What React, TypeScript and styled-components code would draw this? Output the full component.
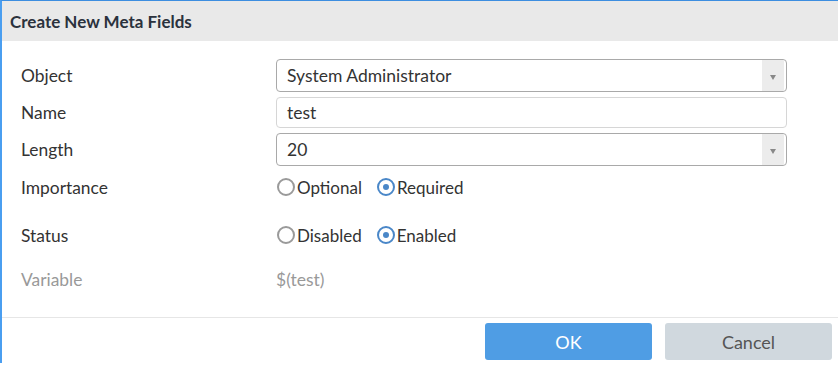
import React from 'react';
import styled, { createGlobalStyle } from 'styled-components';

const GlobalStyle = createGlobalStyle`
  html, body {
    margin: 0;
    padding: 0;
    background: #fff;
  }
  body {
    font-family: Lato, "Noto Sans", "Liberation Sans", sans-serif;
    color: #333;
  }
`;

const Dialog = styled.div`
  width: 838px;
  height: 363px;
  box-sizing: border-box;
  border-top: 1px solid #3d8ee0;
  border-left: 2px solid #4a9ef0;
  display: flex;
  flex-direction: column;
  background: #fff;
`;

const Header = styled.div`
  height: 40px;
  flex-shrink: 0;
  background: #e9e9e9;
  display: flex;
  align-items: center;
  padding-left: 8px;
  font-size: 17px;
  font-weight: 700;
  color: #2b323d;
`;

const Body = styled.div`
  flex: 1;
  padding: 18px 51px 0 19px;
  display: flex;
  flex-direction: column;
`;

const Row = styled.div<{ $h: number; $mt?: number }>`
  height: ${p => p.$h}px;
  margin-top: ${p => p.$mt ?? 0}px;
  display: grid;
  grid-template-columns: 255px 1fr;
  align-items: center;
`;

const Label = styled.div<{ $muted?: boolean }>`
  font-size: 17.4px;
  color: ${p => (p.$muted ? '#999' : '#333')};
`;

const SelectBox = styled.div`
  height: 33px;
  box-sizing: border-box;
  border: 1px solid #a9a9a9;
  border-radius: 4px;
  display: flex;
  align-items: center;
  overflow: hidden;
`;

const SelectValue = styled.div`
  flex: 1;
  padding-left: 10px;
  font-size: 17.5px;
  color: #333;
`;

const Arrow = styled.div`
  width: 22px;
  height: 100%;
  margin-right: 2px;
  background: #ececec;
  display: flex;
  align-items: center;
  justify-content: center;
  &::after {
    content: '';
    border-left: 3.5px solid transparent;
    border-right: 3.5px solid transparent;
    border-top: 5px solid #888;
    margin-top: 3px;
  }
`;

const TextInput = styled.div`
  height: 31px;
  box-sizing: border-box;
  border: 1px solid #d6d6d6;
  border-radius: 4px;
  display: flex;
  align-items: center;
  padding-left: 10px;
  font-size: 17.5px;
  color: #333;
`;

const RadioGroup = styled.div`
  display: flex;
  align-items: center;
  gap: 15px;
  padding-left: 1px;
`;

const RadioOption = styled.label`
  display: flex;
  align-items: center;
  font-size: 17px;
  color: #333;
`;

const Circle = styled.span<{ $checked?: boolean }>`
  width: 18px;
  height: 18px;
  box-sizing: border-box;
  border-radius: 50%;
  border: 2px solid ${p => (p.$checked ? '#4a87c8' : '#9a9a9a')};
  display: inline-flex;
  align-items: center;
  justify-content: center;
  margin-right: 2px;
  &::after {
    content: '';
    width: 6px;
    height: 6px;
    border-radius: 50%;
    background: ${p => (p.$checked ? '#4a87c8' : 'transparent')};
  }
`;

const VarValue = styled.div`
  font-size: 17.5px;
  color: #999;
`;

const Footer = styled.div`
  height: 46px;
  flex-shrink: 0;
  box-sizing: border-box;
  border-top: 1px solid #e6e6e6;
  display: flex;
  justify-content: flex-end;
  align-items: flex-start;
  padding: 5px 6px 0 0;
  gap: 13px;
`;

const Button = styled.button<{ $primary?: boolean }>`
  width: 167px;
  height: 37px;
  border: none;
  border-radius: 3px;
  font-family: inherit;
  font-size: 18px;
  background: ${p => (p.$primary ? '#4f9de4' : '#d0d8de')};
  color: ${p => (p.$primary ? '#fff' : '#555')};
`;

const Radio = ({ label, checked }: { label: string; checked?: boolean }) => (
  <RadioOption>
    <Circle $checked={checked} />
    {label}
  </RadioOption>
);

const App = () => (
  <>
    <GlobalStyle />
    <Dialog>
      <Header>Create New Meta Fields</Header>
      <Body>
        <Row $h={33}>
          <Label>Object</Label>
          <SelectBox>
            <SelectValue>System Administrator</SelectValue>
            <Arrow />
          </SelectBox>
        </Row>
        <Row $h={31} $mt={5}>
          <Label>Name</Label>
          <TextInput>test</TextInput>
        </Row>
        <Row $h={33} $mt={5}>
          <Label>Length</Label>
          <SelectBox>
            <SelectValue>20</SelectValue>
            <Arrow />
          </SelectBox>
        </Row>
        <Row $h={42}>
          <Label>Importance</Label>
          <RadioGroup>
            <Radio label="Optional" />
            <Radio label="Required" checked />
          </RadioGroup>
        </Row>
        <Row $h={54}>
          <Label>Status</Label>
          <RadioGroup>
            <Radio label="Disabled" />
            <Radio label="Enabled" checked />
          </RadioGroup>
        </Row>
        <Row $h={34}>
          <Label $muted>Variable</Label>
          <VarValue>$(test)</VarValue>
        </Row>
      </Body>
      <Footer>
        <Button $primary>OK</Button>
        <Button>Cancel</Button>
      </Footer>
    </Dialog>
  </>
);

export default App;
